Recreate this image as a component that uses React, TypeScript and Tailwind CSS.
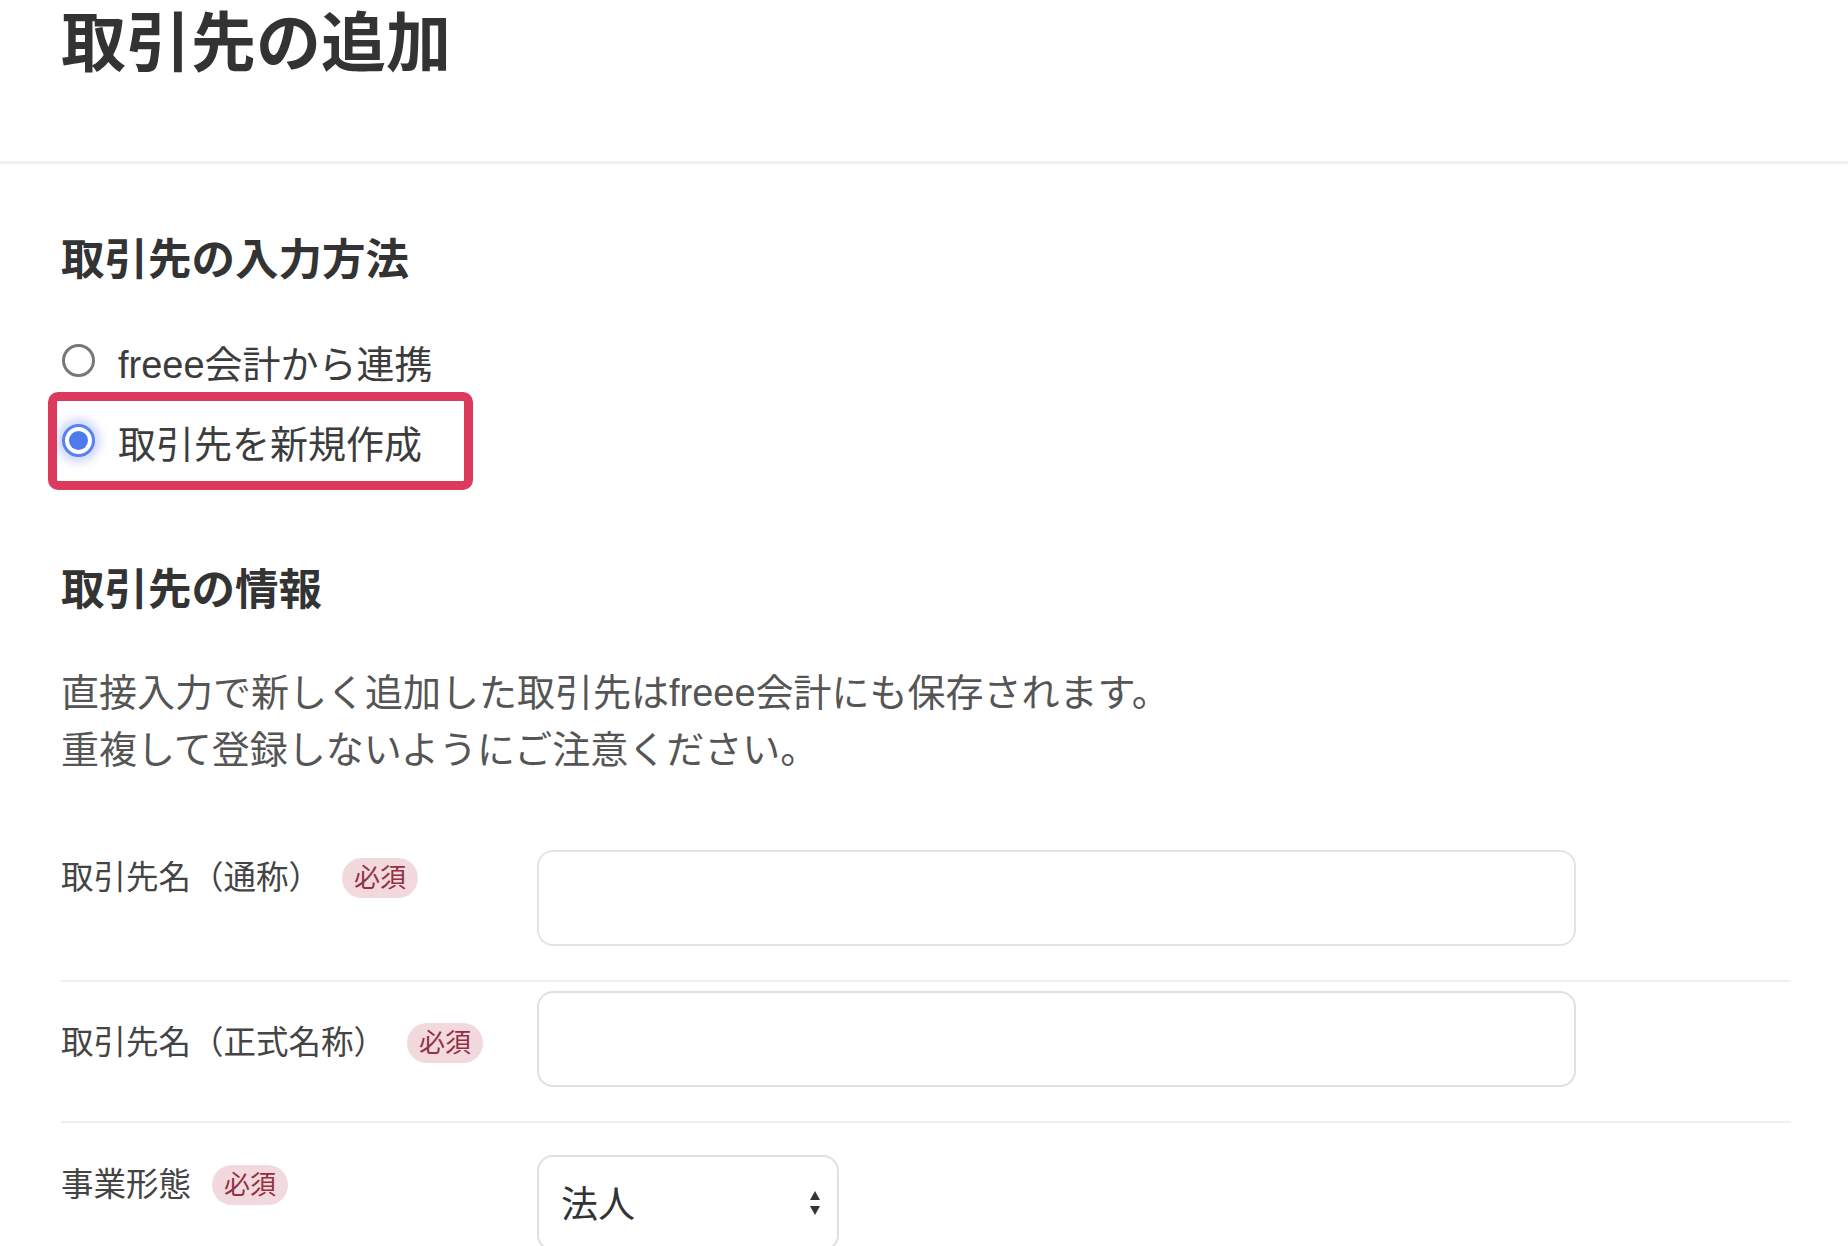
import React from "react";

const FONT = "font-['Liberation_Sans','Noto_Sans_CJK_JP',sans-serif]";

function Badge() {
  return (
    <span className="inline-flex h-[40px] items-center rounded-full bg-[#f2d9dd] px-[12px] text-[26px] leading-none text-[#923044]">
      必須
    </span>
  );
}

export default function App() {
  return (
    <div className={`${FONT} h-[1246px] w-[1848px] overflow-hidden bg-white`}>
      <header className="h-[164px] border-b-[3px] border-[#f1f1f1] px-[61px]">
        <h1 className="text-[65px] font-bold leading-[88px] text-[#333333]">取引先の追加</h1>
      </header>

      <main className="w-[1791px] pl-[61px]">
        <h2 className="mt-[66px] text-[43.5px] font-bold leading-[60px] text-[#333333]">取引先の入力方法</h2>

        <div className="mt-[40px] flex h-[60px] items-center gap-[23px] pl-[1px]">
          <span className="box-border h-[33px] w-[33px] rounded-full border-[3px] border-[#777777] bg-white" />
          <span className="pt-[10px] text-[38px] leading-[60px] text-[#3c3c3c]">freee会計から連携</span>
        </div>

        <div className="relative mt-[20px] flex h-[60px] items-center gap-[23px] pl-[1px]">
          <span className="box-border flex h-[33px] w-[33px] items-center justify-center rounded-full border-[3px] border-[#5a82ef] bg-white shadow-[0_0_10px_5px_rgba(80,115,240,0.30)]">
            <span className="h-[19px] w-[19px] rounded-full bg-[#4f7aec]" />
          </span>
          <span className="pt-[10px] text-[38px] leading-[60px] text-[#3c3c3c]">取引先を新規作成</span>
          <div className="pointer-events-none absolute left-[-13px] top-[-18px] h-[98px] w-[425px] rounded-[10px] border-[9px] border-[#db3a5c]" />
        </div>

        <h2 className="mt-[90px] text-[43.5px] font-bold leading-[60px] text-[#333333]">取引先の情報</h2>

        <p className="mt-[45px] text-[38px] leading-[57px] text-[#555555]">
          直接入力で新しく追加した取引先はfreee会計にも保存されます。
          <br />
          重複して登録しないようにご注意ください。
        </p>

        {/* Row 1 */}
        <div className="mt-[71px] flex border-b-2 border-[#efefef] pb-[34px]">
          <div className="flex h-[48px] w-[476px] items-center gap-[21px] pt-[8px]">
            <span className="text-[32.5px] leading-[40px] text-[#444444]">取引先名（通称）</span>
            <Badge />
          </div>
          <div className="box-border h-[96px] w-[1039px] rounded-[16px] border-2 border-[#e4e4e4] bg-white" />
        </div>

        {/* Row 2 */}
        <div className="flex border-b-2 border-[#efefef] pb-[34px] pt-[9px]">
          <div className="flex h-[72px] w-[476px] items-center gap-[21px] pt-[32px]">
            <span className="text-[32.5px] leading-[40px] text-[#444444]">取引先名（正式名称）</span>
            <Badge />
          </div>
          <div className="box-border h-[96px] w-[1039px] rounded-[16px] border-2 border-[#e0e0e0] bg-white" />
        </div>

        {/* Row 3 */}
        <div className="flex pt-[32px]">
          <div className="flex h-[50px] w-[476px] items-center gap-[21px] pt-[10px]">
            <span className="text-[32.5px] leading-[40px] text-[#444444]">事業形態</span>
            <Badge />
          </div>
          <div className="box-border flex h-[96px] w-[302px] items-center justify-between rounded-[16px] border-2 border-[#e0e0e0] bg-white pl-[22px] pr-[16px]">
            <span className="pt-[4px] text-[37px] leading-[57px] text-[#333333]">法人</span>
            <svg width="12" height="26" viewBox="0 0 12 26" className="text-[#333]">
              <path d="M6 1 L11 10 L1 10 Z" fill="currentColor" />
              <path d="M6 25 L11 16 L1 16 Z" fill="currentColor" />
            </svg>
          </div>
        </div>
      </main>
    </div>
  );
}
